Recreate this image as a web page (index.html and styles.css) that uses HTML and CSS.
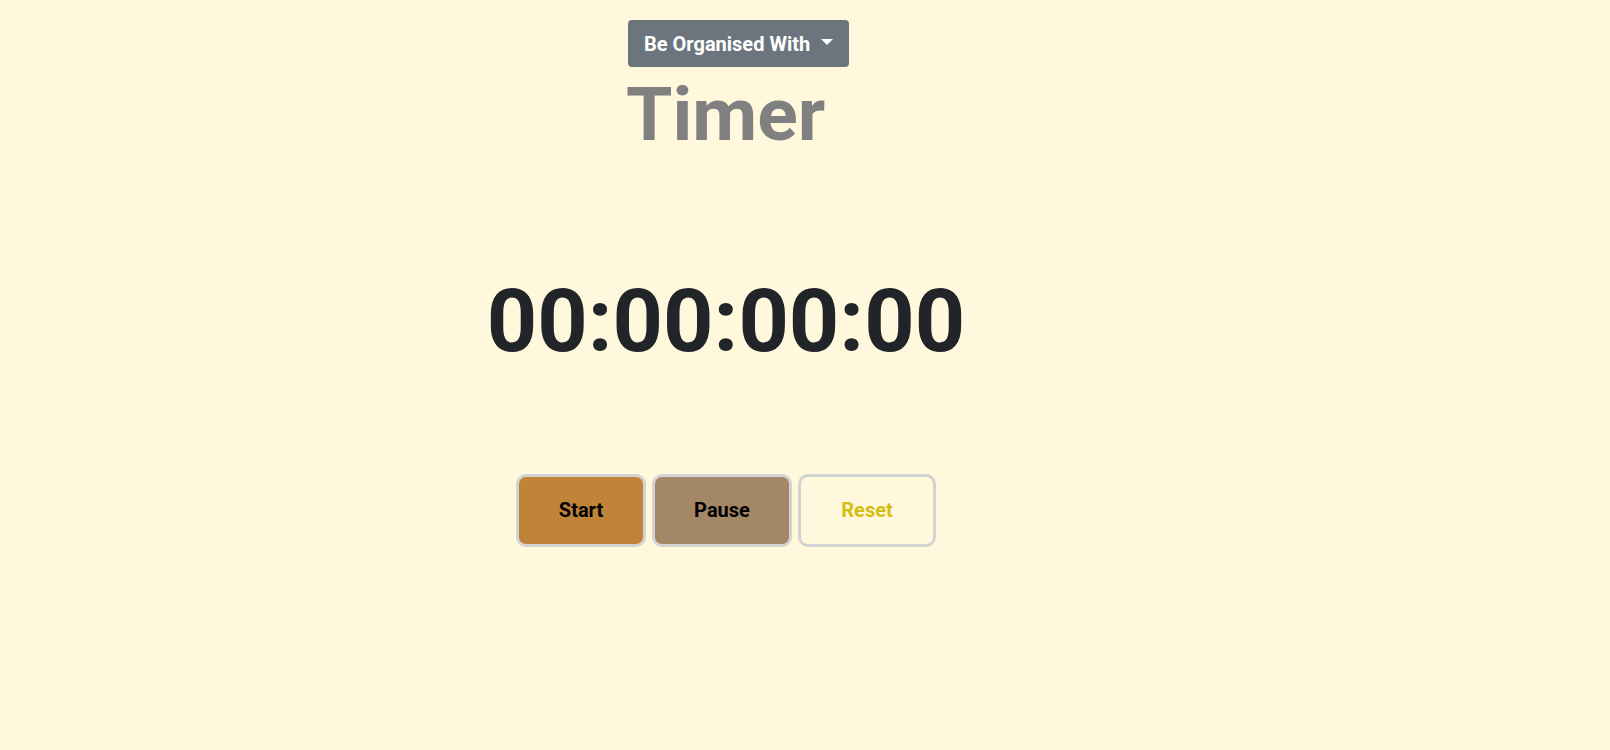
FILE: index.html
```html
<!DOCTYPE html>
<html lang="en">
<head>
<meta charset="utf-8">
<title>Timer</title>
<link rel="stylesheet" href="styles.css">
</head>
<body>
<main class="page">
  <header class="top">
    <button class="dropdown-btn" type="button">Be Organised With<span class="caret"></span></button>
    <h1 class="title">Timer</h1>
  </header>
  <section class="clock">
    <div class="digits">00:00:00:00</div>
  </section>
  <div class="controls">
    <button class="ctl start" type="button">Start</button>
    <button class="ctl pause" type="button">Pause</button>
    <button class="ctl reset" type="button">Reset</button>
  </div>
</main>
</body>
</html>
```
FILE: styles.css
```css
* { box-sizing: border-box; }
html, body { margin: 0; padding: 0; }
body {
  background: #fff8dc;
  font-family: Roboto, "Liberation Sans", sans-serif;
  color: #212529;
  height: 750px;
  overflow: hidden;
}
.page {
  width: 1452px;
}
.top {
  padding: 20px 0 0 628px;
  display: flex;
  flex-direction: column;
  align-items: flex-start;
}
.dropdown-btn {
  display: inline-flex;
  align-items: center;
  height: 47px;
  padding: 0 16px 0 16px;
  background: #6c757d;
  color: #fff;
  border: 0;
  border-radius: 4px;
  font-family: Roboto, "Liberation Sans", sans-serif;
  font-weight: 700;
  font-size: 20px;
}
.caret {
  display: inline-block;
  margin-left: 11px;
  width: 0;
  height: 0;
  border-top: 6px solid #fff;
  border-left: 6px solid transparent;
  border-right: 6px solid transparent;
  position: relative;
  top: -2px;
}
.title {
  margin: 2px 0 0 -2px;
  font-size: 75px;
  font-weight: 700;
  line-height: 1.2;
  color: #808080;
}
.clock {
  margin-top: 109px;
  text-align: center;
}
.digits {
  font-size: 88px;
  font-weight: 700;
  line-height: 1.2;
  color: #212529;
}
.controls {
  margin-top: 100px;
  display: flex;
  justify-content: center;
  gap: 6px;
}
.ctl {
  height: 73px;
  padding: 0;
  border: 3px solid #d3d3d3;
  border-radius: 10px;
  font-family: Roboto, "Liberation Sans", sans-serif;
  font-size: 20px;
  font-weight: 700;
  color: #000;
}
.start { background: #c08439; width: 130px; }
.pause { background: #a38767; width: 140px; }
.reset { background: #fff8dc; color: #d6bd14; width: 138px; }
```
